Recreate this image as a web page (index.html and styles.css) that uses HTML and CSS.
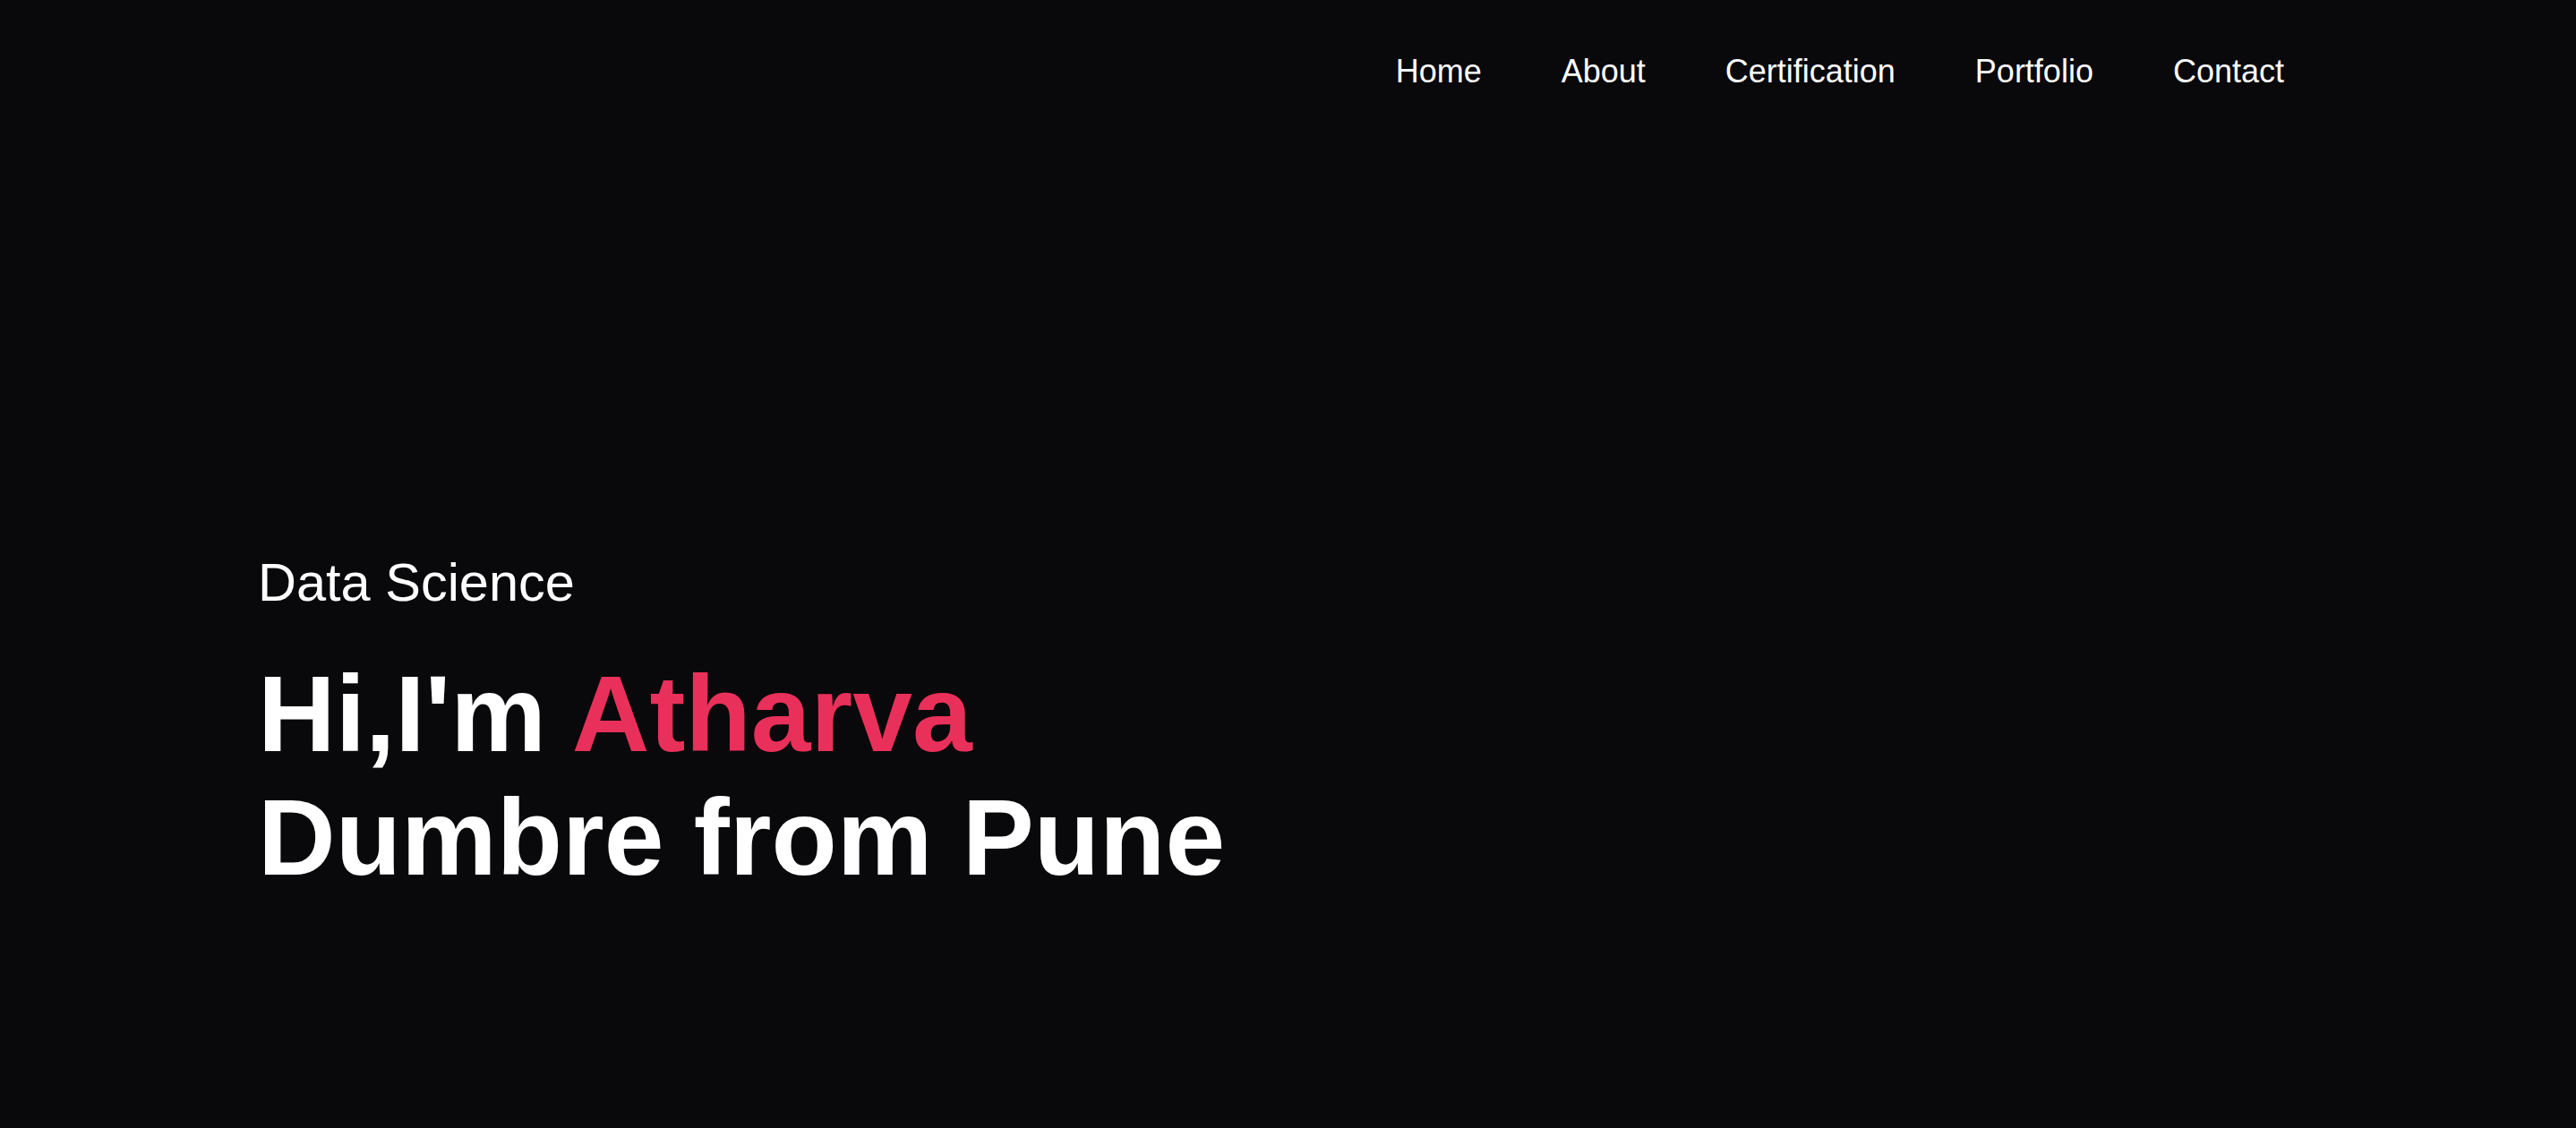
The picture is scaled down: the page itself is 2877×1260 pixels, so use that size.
FILE: index.html
```html
<!DOCTYPE html>
<html lang="en">
<head>
<meta charset="utf-8">
<title>Atharva Dumbre</title>
<link rel="stylesheet" href="styles.css">
</head>
<body>
<header class="site-header">
  <nav class="nav">
    <a class="nav-link" href="#home">Home</a>
    <a class="nav-link" href="#about">About</a>
    <a class="nav-link" href="#certification">Certification</a>
    <a class="nav-link" href="#portfolio">Portfolio</a>
    <a class="nav-link" href="#contact">Contact</a>
  </nav>
</header>
<main class="hero" id="home">
  <p class="hero-sub">Data Science</p>
  <h1 class="hero-title">Hi,I'm <span class="accent">Atharva</span><br>Dumbre from Pune</h1>
</main>
</body>
</html>
```

FILE: styles.css
```css
html, body {
  margin: 0;
  padding: 0;
}

body {
  background: #09080b;
  color: #ffffff;
  font-family: "Liberation Sans", Arial, Helvetica, sans-serif;
  height: 1260px;
  overflow: hidden;
}

.site-header {
  padding-top: 60px;
  padding-right: 326px;
}

.nav {
  display: flex;
  justify-content: flex-end;
  gap: 89px;
}

.nav-link {
  color: #ffffff;
  text-decoration: none;
  font-size: 36px;
  line-height: 40px;
}

.hero {
  padding-left: 288px;
  padding-top: 516px;
}

.hero-sub {
  margin: 0;
  font-size: 59.5px;
  line-height: 70px;
  font-weight: 400;
}

.hero-title {
  margin: 42px 0 0;
  font-size: 120px;
  line-height: 138px;
  font-weight: 700;
}

.accent {
  color: #e9305a;
}
```
